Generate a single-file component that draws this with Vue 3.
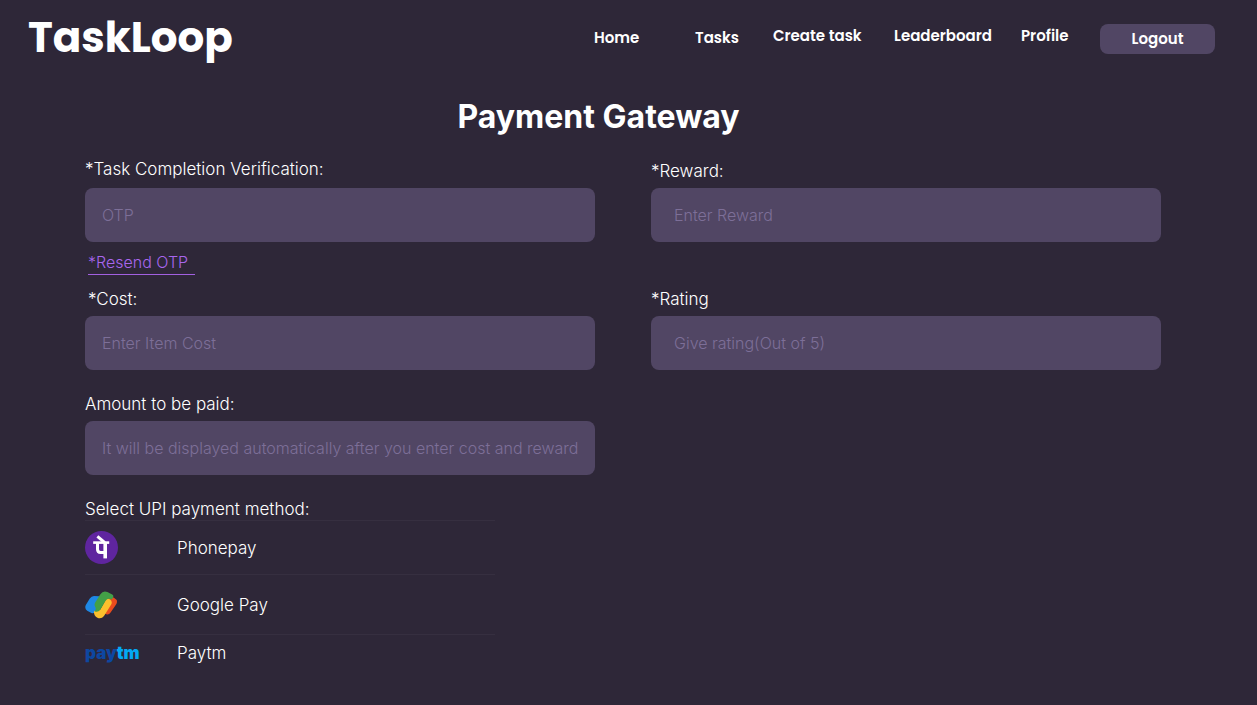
<script setup>
import { ref } from 'vue'

const links = [
  { text: 'Home' },
  { text: 'Tasks' },
  { text: 'Create task', raised: true },
  { text: 'Leaderboard', raised: true },
  { text: 'Profile', raised: true }
]
const otp = ref('')
const reward = ref('')
const cost = ref('')
const rating = ref('')
const method = ref('')
</script>

<template>
  <div class="page">
    <header class="header">
      <a class="brand" href="#">TaskLoop</a>
      <nav class="nav">
        <a v-for="l in links" :key="l.text" href="#" class="nav-link" :class="{ raised: l.raised }">{{ l.text }}</a>
        <button type="button" class="logout">Logout</button>
      </nav>
    </header>

    <main>
      <h1 class="title">Payment Gateway</h1>
      <form class="form" @submit.prevent>
        <div class="field spaced">
          <label for="otp">*Task Completion Verification:</label>
          <input id="otp" v-model="otp" type="text" placeholder="OTP" />
          <a class="resend" href="#">*Resend OTP</a>
        </div>
        <div class="field wide">
          <label for="reward">*Reward:</label>
          <input id="reward" v-model="reward" type="text" placeholder="Enter Reward" />
        </div>
        <div class="field inset">
          <label for="cost">*Cost:</label>
          <input id="cost" v-model="cost" type="text" placeholder="Enter Item Cost" />
        </div>
        <div class="field wide">
          <label for="rating">*Rating</label>
          <input id="rating" v-model="rating" type="text" placeholder="Give rating(Out of 5)" />
        </div>
        <div class="field amount">
          <label for="amount">Amount to be paid:</label>
          <input id="amount" type="text" readonly placeholder="It will be displayed automatically after you enter cost and reward" />
        </div>

        <fieldset class="methods">
          <legend>Select UPI payment method:</legend>
          <label class="method">
            <input v-model="method" type="radio" name="upi" value="phonepe" />
            <span class="mark">
              <svg width="33" height="33" viewBox="0 0 33 33" aria-hidden="true">
                <circle cx="16.5" cy="16.5" r="16.5" fill="#5f259f" />
                <g fill="none" stroke="#fff">
                  <path d="M8.2 11.6H24.2" stroke-width="2.6" />
                  <path d="M12.4 5.4L19.8 11.6" stroke-width="3" />
                  <path d="M12.5 11.3V18.2Q12.5 21.4 15.6 21.4H20" stroke-width="3" />
                  <path d="M20.2 11.3V27.4" stroke-width="3.6" />
                </g>
              </svg>
            </span>
            <span>Phonepay</span>
          </label>
          <label class="method tall">
            <input v-model="method" type="radio" name="upi" value="gpay" />
            <span class="mark">
              <svg width="33" height="28" viewBox="0 0 33 28" aria-hidden="true">
                <path d="M22 5L28.6 6.4Q33.4 9 31.4 13L25.6 21.6Q23.4 25 19.6 22.6L16 20Z" fill="#ea4c1d" />
                <path d="M14 5.2L9 5Q6.4 5 4.8 7.6L.8 14Q-.8 17.4 2.2 19.8L6.4 22Q8.4 22.6 10 21.4L16 9Z" fill="#1e88e5" />
                <path d="M9.2 20L15 19L20.6 9.2Q22.2 6.8 25 8.6Q27.8 10.4 26.2 13.4L19 25Q16.4 28.4 12.4 26.8Q8.2 24.4 9.2 20Z" fill="#fbc02d" />
                <path d="M10.2 11.4L15.2 3.4Q18.2-1 22.4 1L27.2 3.6Q29.2 4.8 27.8 7L26.6 8.6Q22.6 6.6 20.6 9.8L15.2 18.8Q13 21.8 9.6 20.4Q11.6 17.8 10 15.6Q9 13.6 10.2 11.4Z" fill="#43a047" />
              </svg>
            </span>
            <span>Google Pay</span>
          </label>
          <label class="method last">
            <input v-model="method" type="radio" name="upi" value="paytm" />
            <span class="mark paytm" aria-hidden="true">pay<b>tm</b></span>
            <span>Paytm</span>
          </label>
        </fieldset>
      </form>
    </main>
  </div>
</template>

<style>
body {
  margin: 0;
  background: #2e2738;
}
</style>

<style scoped>
.page {
  min-height: 100vh;
  box-sizing: border-box;
  background: #2e2738;
  color: #fff;
  font-family: Inter, "Liberation Sans", sans-serif;
  font-size: 17px;
  font-weight: 300;
}
a {
  color: inherit;
  text-decoration: none;
}
.header {
  display: flex;
  justify-content: space-between;
  height: 78px;
  padding: 0 42px 0 28px;
}
.brand {
  font-family: Poppins, Inter, sans-serif;
  font-size: 42px;
  font-weight: 700;
  line-height: 76px;
}
.nav {
  display: grid;
  grid-template-columns: 101px 78px 121px 127px 79px 115px;
  align-items: center;
  font-family: Poppins, Inter, sans-serif;
  font-size: 15px;
  font-weight: 600;
}
.nav-link {
  padding-bottom: 3px;
}
.nav-link.raised {
  padding-bottom: 7px;
}
.logout {
  height: 30px;
  padding: 0 0 2px;
  border: 0;
  border-radius: 8px;
  background: #514664;
  color: #fff;
  font: inherit;
}
.title {
  margin: 0;
  padding-right: 60px;
  text-align: center;
  font-size: 32px;
  font-weight: 700;
  line-height: 78px;
}
.form {
  display: grid;
  grid-template-columns: 1fr 1fr;
  column-gap: 56px;
  padding: 0 96px 0 85px;
}
.field {
  display: flex;
  flex-direction: column;
  align-items: flex-start;
}
.field label {
  padding-bottom: 2px;
  line-height: 30px;
}
.field.spaced label {
  padding-bottom: 6px;
  line-height: 26px;
}
.field.inset label {
  padding-left: 3px;
}
.field input {
  width: 100%;
  height: 54px;
  box-sizing: border-box;
  padding: 0 17px;
  border: 0;
  border-radius: 8px;
  background: #514664;
  color: #fff;
  font: inherit;
  font-size: 16px;
}
.field.wide input {
  padding: 0 23px;
}
.field input::placeholder {
  color: #7d6f98;
  opacity: 1;
}
.resend {
  width: 107px;
  margin: 8px 0 9px 3px;
  border-bottom: 1px solid #a260e0;
  color: #a866ee;
  font-size: 16px;
  line-height: 24px;
}
.amount {
  margin-top: 19px;
  grid-column: 1;
}
.methods {
  grid-column: 1;
  min-width: 0;
  max-width: 410px;
  margin: 24px 0 0;
  padding: 0;
  border: 0;
}
.methods legend {
  padding: 0;
  line-height: 21px;
}
.method {
  position: relative;
  display: flex;
  align-items: center;
  box-sizing: border-box;
  height: 54px;
  border-top: 1px solid #362f40;
}
.method.tall {
  height: 60px;
}
.method.last {
  height: 36px;
}
.method input {
  position: absolute;
  opacity: 0;
  margin: 0;
}
.mark {
  display: flex;
  width: 92px;
}
.paytm {
  color: #0d47a1;
  font-size: 17px;
  font-weight: 900;
  line-height: 20px;
}
.paytm b {
  color: #03a9f4;
  font-weight: 900;
}
</style>
